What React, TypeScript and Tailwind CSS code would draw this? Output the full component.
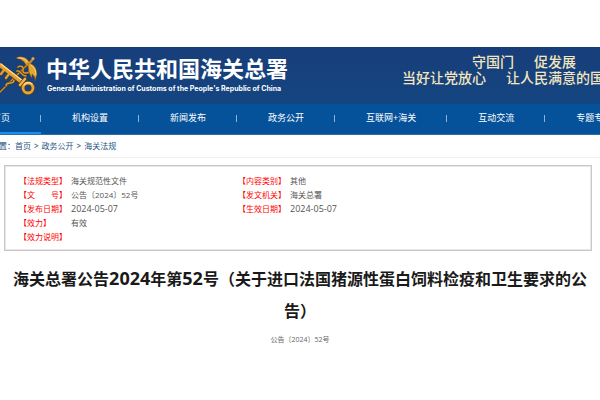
import type { ReactNode } from "react";

type NavItem = { label: string; active?: boolean };
type Field = { label: ReactNode; value: ReactNode };

// Digits are set a pixel larger than the Chinese text next to them.
function Digits({ children }: { children: ReactNode }) {
  return <span className="text-[9px]">{children}</span>;
}

const NAV_ITEMS: NavItem[] = [
  { label: "首页", active: true },
  { label: "机构设置" },
  { label: "新闻发布" },
  { label: "政务公开" },
  { label: "互联网+海关" },
  { label: "互动交流" },
  { label: "专题专栏" },
];

const CRUMBS = ["首页", "政务公开", "海关法规"];

const LEFT_FIELDS: Field[] = [
  { label: "法规类型", value: "海关规范性文件" },
  { label: "文　　号", value: "公告〔2024〕52号" },
  { label: "发布日期", value: <Digits>2024-05-07</Digits> },
  { label: "效力", value: "有效" },
  { label: "效力说明", value: "" },
];

const RIGHT_FIELDS: Field[] = [
  { label: "内容类别", value: "其他" },
  { label: "发文机关", value: "海关总署" },
  { label: "生效日期", value: <Digits>2024-05-07</Digits> },
];

// ── Header ────────────────────────────────────────────────────────────────────

function Emblem() {
  return (
    <svg
      className="h-11 w-10 shrink-0"
      viewBox="0 0 40 44"
      fill="none"
      strokeLinecap="round"
      strokeLinejoin="round"
      aria-hidden="true"
    >
      {/* Staff with the two snakes */}
      <path d="M0 37 30 7" stroke="#5e3a10" strokeWidth="2.2" />
      <path d="M0 37 30 7" stroke="#d9982c" strokeWidth="1.2" />
      <path
        d="M6 31c0-3 3-3 4-3s4 0 4-3M18 12c3-2 6 0 5 3s3 4 6 2M17 16c4-1 4 5 9 5"
        stroke="#5e3a10"
        strokeWidth="2.4"
      />
      <path
        d="M6 31c0-3 3-3 4-3s4 0 4-3M18 12c3-2 6 0 5 3s3 4 6 2M17 16c4-1 4 5 9 5"
        stroke="#dd9f35"
        strokeWidth="1.4"
      />
      {/* Wings */}
      <path
        d="M16 3c6-3 12 0 14 6-1 2-3 2-4 1-2-4-5-6-10-7Z"
        fill="#e5a532"
        stroke="#7a4a12"
        strokeWidth=".6"
      />
      <path
        d="M28 8c7 1 11 7 7 18 0-4-1-5-3-7v4c-3-4-4-8-4-15Z"
        fill="#e5a532"
        stroke="#7a4a12"
        strokeWidth=".6"
      />
      <path d="M18 3c5-1 9 2 11 6M31 10c4 3 5 6 5 10" stroke="#ffe08a" strokeWidth=".9" />
      <path d="m28 10 5-6" stroke="#c98a2a" strokeWidth="2" />
      <circle cx="33" cy="3.500" r="1.500" fill="#e2a53c" />
      {/* Key */}
      <path d="m0 10 23 18" stroke="#5e3a10" strokeWidth="5" />
      <path d="m4 15-3 4M9 19l-3 4" stroke="#5e3a10" strokeWidth="3.400" />
      <path d="m0 10 23 18" stroke="#e3a033" strokeWidth="3.800" />
      <path d="m4 15-3 4M9 19l-3 4" stroke="#e3a033" strokeWidth="2.200" />
      <path d="m1 9 22 17" stroke="#ffe394" strokeWidth="1.100" />
      <path d="m20 30 5-6" stroke="#5e3a10" strokeWidth="4" />
      <path d="m20 30 5-6" stroke="#f0b545" strokeWidth="2.600" />
      <circle cx="28" cy="33" r="5" stroke="#5e3a10" strokeWidth="4" />
      <circle cx="28" cy="33" r="5" stroke="#e6a435" strokeWidth="2.800" />
      <path d="M24 30c2-3 6-3 8-1" stroke="#ffe9a0" strokeWidth="1.100" />
    </svg>
  );
}

function Header() {
  return (
    <header className="bg-linear-to-b from-[#173e7a] to-[#124984]">
      <div className="flex h-[57px] items-start justify-between overflow-hidden">
        <div className="flex shrink-0 items-start pt-2">
          <Emblem />
          <div className="pl-[6px] whitespace-nowrap text-white">
            <div className="text-[22px] leading-[26px] font-bold">中华人民共和国海关总署</div>
            <div className="pt-[3px] pl-px font-['Inter','Liberation_Sans',sans-serif] text-[7px] leading-[10px] font-bold">
              General Administration of Customs of the People&apos;s Republic of China
            </div>
          </div>
        </div>
        <div className="-mr-1 shrink-0 pt-[7px] text-sm leading-4 font-medium whitespace-nowrap text-[#f3e5bd]">
          <p className="flex gap-5 pl-[70px]">
            <span>守国门</span>
            <span>促发展</span>
          </p>
          <p className="flex gap-5">
            <span>当好让党放心</span>
            <span>让人民满意的国</span>
          </p>
        </div>
      </div>
      <nav className="overflow-hidden border-b border-[#2f6cab] bg-[#05529a]">
        <ul className="-ml-[39px] flex">
          {NAV_ITEMS.map((item) => (
            <li
              key={item.label}
              className={`flex shrink-0 items-center border-b-2 ${
                item.active ? "border-[#1c8df0]" : "border-transparent"
              }`}
            >
              <a href="#" className="px-[31px] text-[9px] leading-7 whitespace-nowrap text-white">
                {item.label}
              </a>
              <span className="-ml-px h-[7px] w-px bg-[#8fb2d6]" />
            </li>
          ))}
        </ul>
      </nav>
    </header>
  );
}

function Breadcrumb() {
  return (
    <nav className="flex overflow-hidden border-b border-[#f0f0f0] text-[8px] leading-[22px] whitespace-nowrap text-[#1f5583]">
      <span className="-ml-px">置：</span>
      {CRUMBS.map((crumb, i) => (
        <span key={crumb}>
          {i > 0 ? <span className="px-[3px] font-semibold">&gt;</span> : null}
          <a href="#">{crumb}</a>
        </span>
      ))}
    </nav>
  );
}

// ── Document ──────────────────────────────────────────────────────────────────

function FieldList({ fields }: { fields: Field[] }) {
  return (
    <dl className="flex flex-1 flex-col">
      {fields.map((field, i) => (
        <div key={i} className="flex">
          <dt className="w-[52px] shrink-0 text-[#ff0000]">【{field.label}】</dt>
          <dd className="text-[#555]">{field.value}</dd>
        </div>
      ))}
    </dl>
  );
}

export default function App() {
  return (
    <div className="bg-white pt-[47px] font-['Open_Sans','Noto_Sans_CJK_SC',sans-serif]">
      <Header />
      <Breadcrumb />
      <main>
        <section className="mt-[7px] mr-2 ml-1 flex border border-[#c8c8c8] pt-2 pr-[134px] pb-[6px] pl-[14px] text-[8px] leading-[14px] shadow-[inset_0_0_0_1px_#e6e6e6]">
          <FieldList fields={LEFT_FIELDS} />
          <FieldList fields={RIGHT_FIELDS} />
        </section>
        <h1 className="px-2 pt-3 text-center text-base leading-8 font-bold text-[#1a1a1a]">
          海关总署公告<span className="text-lg leading-none">2024</span>年第
          <span className="text-lg leading-none">52</span>
          号（关于进口法国猪源性蛋白饲料检疫和卫生要求的公告）
        </h1>
        <p className="pt-[5px] text-center text-[7px] leading-4 text-[#666]">公告〔2024〕52号</p>
      </main>
    </div>
  );
}
